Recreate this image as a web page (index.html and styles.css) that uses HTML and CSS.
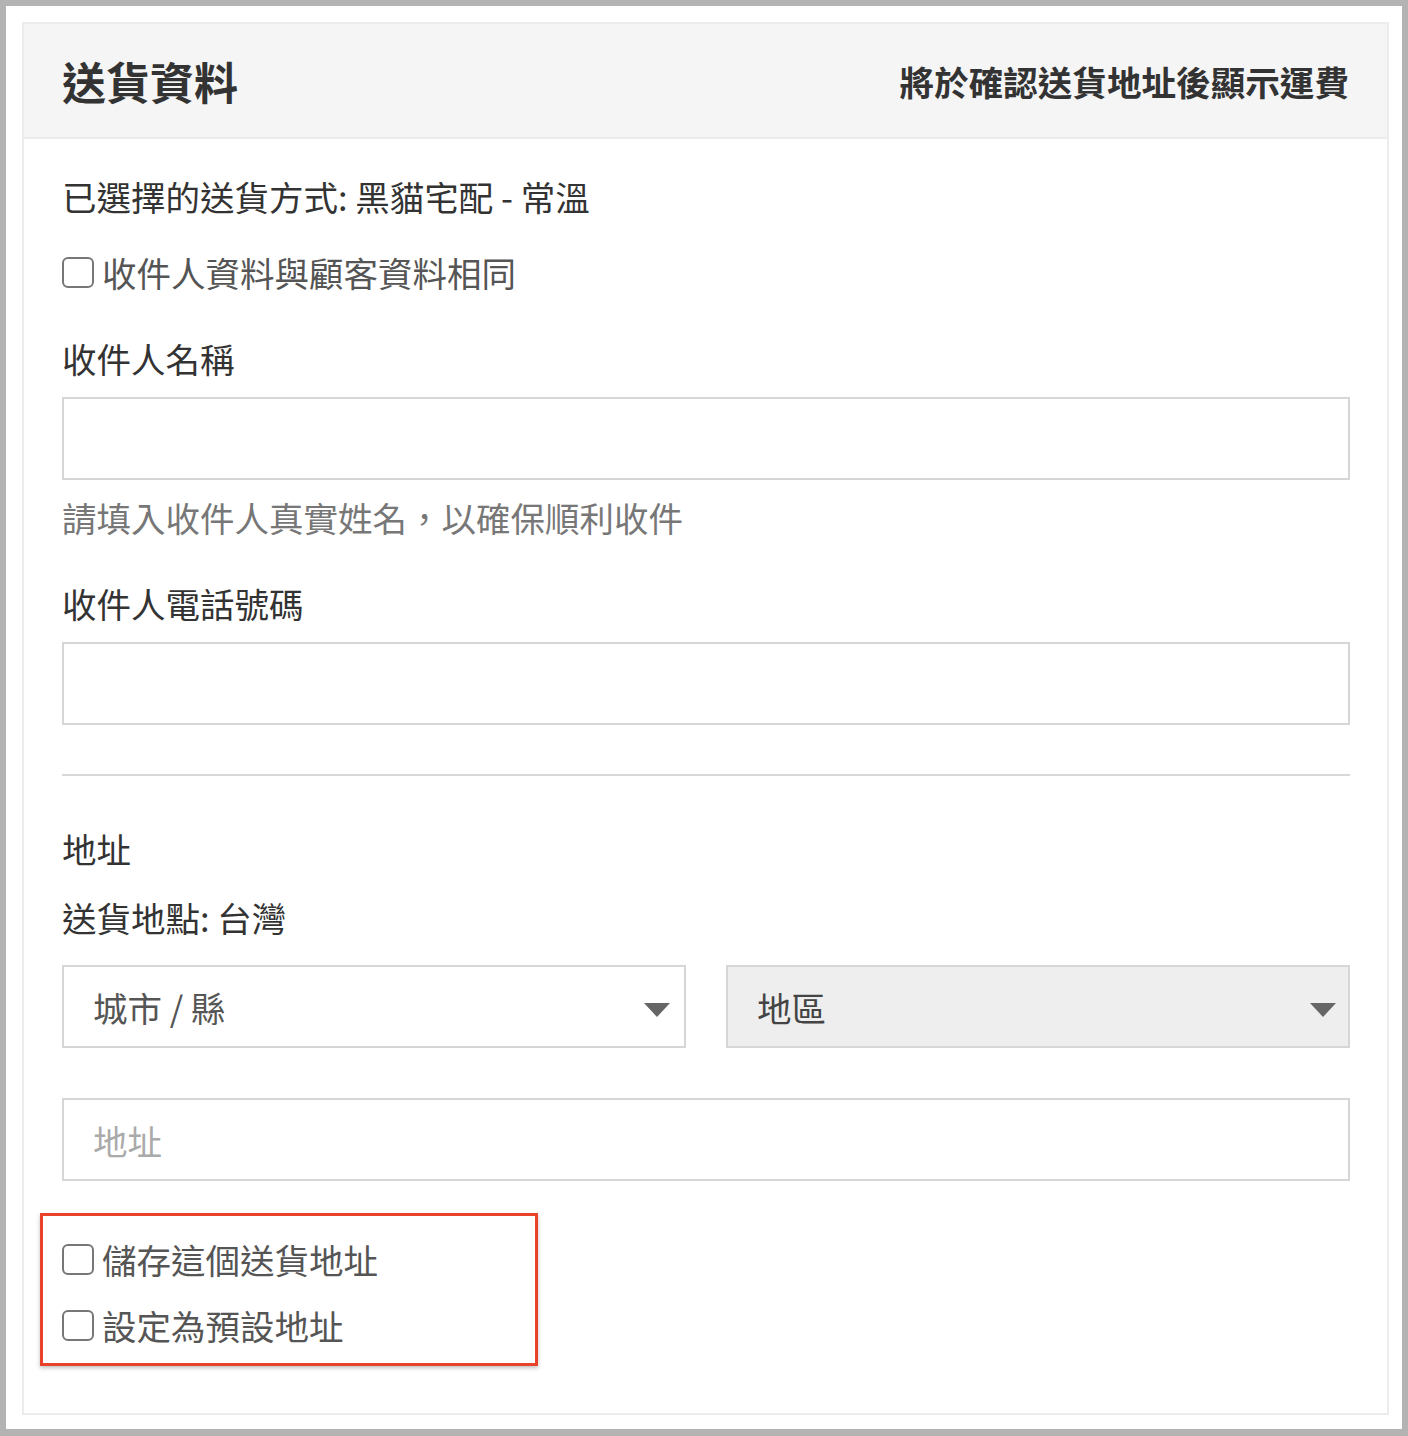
FILE: index.html
```html
<!DOCTYPE html>
<html lang="zh-Hant">
<head>
    <meta charset="UTF-8">
    <meta name="viewport" content="width=device-width, initial-scale=1.0">
    <title>送貨資料</title>
    <link rel="stylesheet" href="styles.css">
</head>
<body>
    <div class="frame">
        <div class="card">
            <div class="card-header">
                <div class="card-title">送貨資料</div>
                <div class="card-note">將於確認送貨地址後顯示運費</div>
            </div>
            <div class="card-body">
                <div class="text-line method">已選擇的送貨方式: 黑貓宅配 - 常溫</div>
                <label class="check-row same-as">
                    <input type="checkbox" class="check">
                    <span>收件人資料與顧客資料相同</span>
                </label>

                <div class="text-line label">收件人名稱</div>
                <input type="text" class="field">
                <div class="text-line help">請填入收件人真實姓名，以確保順利收件</div>

                <div class="text-line label">收件人電話號碼</div>
                <input type="text" class="field">

                <hr class="divider">

                <div class="text-line section">地址</div>
                <div class="text-line country">送貨地點: 台灣</div>

                <div class="select-row">
                    <div class="select">
                        <span>城市 / 縣</span>
                        <svg class="caret" width="26" height="14" viewBox="0 0 26 14"><path d="M0 0H26L13 14Z" fill="#666"/></svg>
                    </div>
                    <div class="select disabled">
                        <span>地區</span>
                        <svg class="caret" width="26" height="14" viewBox="0 0 26 14"><path d="M0 0H26L13 14Z" fill="#666"/></svg>
                    </div>
                </div>

                <input type="text" class="field address" placeholder="地址">

                <div class="highlight">
                    <label class="check-row">
                        <input type="checkbox" class="check">
                        <span>儲存這個送貨地址</span>
                    </label>
                    <label class="check-row second">
                        <input type="checkbox" class="check">
                        <span>設定為預設地址</span>
                    </label>
                </div>
            </div>
        </div>
    </div>
</body>
</html>
```

FILE: styles.css
```css
body {
    margin: 0;
    padding: 6px;
    background-color: #b3b3b3;
    font-family: "Noto Sans CJK TC", "Noto Sans", sans-serif;
    color: #333;
}
.frame {
    background-color: #fff;
    padding: 16px 13px 14px 16px;
}
.card {
    border: 2px solid #ececec;
}
.card-header {
    display: flex;
    justify-content: space-between;
    align-items: center;
    height: 113px;
    padding: 0 38px;
    background-color: #f5f5f5;
    border-bottom: 2px solid #ececec;
}
.card-title {
    font-size: 44px;
    font-weight: bold;
    line-height: 48px;
}
.card-note {
    font-size: 34.6px;
    font-weight: bold;
    line-height: 48px;
}
.card-body {
    padding: 33px 37px 47px 38px;
}
.text-line {
    font-size: 34.5px;
    line-height: 48px;
}
.check-row {
    display: flex;
    align-items: center;
    gap: 8px;
    font-size: 34.5px;
    line-height: 48px;
    color: #555;
}
.check {
    appearance: none;
    -webkit-appearance: none;
    width: 32px;
    height: 31px;
    margin: 0;
    border: 2px solid #777;
    border-radius: 6px;
    background-color: #fff;
}
.same-as {
    margin-top: 28px;
}
.label {
    margin-top: 38px;
}
.field {
    display: block;
    box-sizing: border-box;
    width: 100%;
    height: 83px;
    margin: 15px 0 0;
    padding: 0 29px;
    border: 2px solid #d6d6d6;
    font-family: inherit;
    font-size: 34.5px;
    color: #555;
    outline: none;
}
.field::placeholder {
    color: #aaa;
}
.help {
    margin-top: 13px;
    color: #777;
}
.divider {
    margin: 49px 0 0;
    border: none;
    border-top: 2px solid #d8d8d8;
}
.section {
    margin-top: 48px;
}
.country {
    margin-top: 21px;
}
.select-row {
    display: grid;
    grid-template-columns: 1fr 1fr;
    gap: 40px;
    margin-top: 24px;
}
.select {
    display: flex;
    justify-content: space-between;
    align-items: center;
    box-sizing: border-box;
    height: 83px;
    padding: 0 14px 0 29px;
    border: 2px solid #d6d6d6;
    background-color: #fff;
    font-size: 34.5px;
    color: #555;
}
.select.disabled {
    background-color: #eee;
    color: #444;
    padding-right: 12px;
}
.caret {
    margin-top: 6px;
}
.field.address {
    margin-top: 50px;
}
.highlight {
    width: 473px;
    box-sizing: content-box;
    margin: 32px 0 0 -22px;
    padding: 19px 0 14px 19px;
    border: 3px solid #e8432a;
    box-shadow: 0 2px 4px rgba(0, 0, 0, 0.25);
}
.highlight .second {
    margin-top: 18px;
}
```
